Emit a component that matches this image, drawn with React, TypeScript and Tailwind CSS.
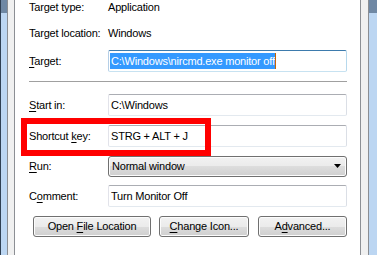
import React from "react";

const font = { fontFamily: "'Liberation Sans', Arial, sans-serif" };

const txt = "text-[11px] leading-[15px] tracking-[-0.2px] whitespace-nowrap text-black";

function Label({ children }: { children: React.ReactNode }) {
  return <div className={`w-[79px] shrink-0 ${txt}`}>{children}</div>;
}

function TextBox({ children }: { children: React.ReactNode }) {
  return (
    <div className={`flex h-[22px] flex-1 items-center rounded-[2px] border border-t-[#abadb3] border-l-[#e2e3ea] border-r-[#dbdfe6] border-b-[#e3e9ef] bg-white pl-[2px] ${txt}`}>
      {children}
    </div>
  );
}

function Btn({ children, w }: { children: React.ReactNode; w: string }) {
  return (
    <div
      className={`${w} flex h-[21px] items-center justify-center rounded-[3px] border border-[#707070] bg-[linear-gradient(#f2f2f2_0%,#ebebeb_50%,#dddddd_50%,#cfcfcf_100%)] shadow-[inset_0_0_0_1px_#fcfcfc] ${txt}`}
    >
      {children}
    </div>
  );
}

const U = ({ children }: { children: React.ReactNode }) => (
  <span className="underline decoration-1 underline-offset-[2px]">{children}</span>
);

export default function App() {
  return (
    <div className="flex h-[255px] w-[377px] overflow-hidden bg-white" style={font}>
      {/* left frame */}
      <div className="w-px bg-[#2f3f52]" />
      <div className="flex w-[6px] flex-col">
        <div className="h-[13px] bg-[#6f88a4]" />
        <div className="flex-1 bg-[#bcd6f2]" />
      </div>
      <div className="w-px bg-[#8a8d92]" />
      <div className="w-[6px] bg-[#f0f0f0]" />
      <div className="w-px bg-[#8c8f94]" />

      {/* panel */}
      <div className="relative flex w-[345px] flex-col bg-white pl-[14px] pr-[13px]">
        <div className="flex h-[15px] items-center">
          <Label>Target type:</Label>
          <div className={txt}>Application</div>
        </div>
        <div className="mt-[11px] flex h-[15px] items-center">
          <Label>Target location:</Label>
          <div className={txt}>Windows</div>
        </div>
        <div className="mt-[9px] flex h-[22px] items-center">
          <Label>
            <U>T</U>arget:
          </Label>
          <div className={`flex h-[22px] flex-1 items-center rounded-[2px] border border-t-[#3d7bad] border-l-[#b5cfe7] border-r-[#b7d9ed] border-b-[#c7e2f1] bg-white pl-px ${txt}`}>
            <span className="flex h-[16px] items-center bg-[#3399ff] pl-[1px] text-white">
              C:\Windows\nircmd.exe monitor off
            </span>
            <span className="h-[16px] w-px bg-[#c86400]" />
          </div>
        </div>
        <div className="mt-[9px] h-px bg-[#a0a0a0]" />
        <div className="mt-[12px] flex h-[22px] items-center">
          <Label>
            <U>S</U>tart in:
          </Label>
          <TextBox>C:\Windows</TextBox>
        </div>
        <div className="mt-[9px] flex h-[22px] items-center">
          <Label>
            Shortcut <U>k</U>ey:
          </Label>
          <TextBox>STRG + ALT + J</TextBox>
        </div>
        <div className="mt-[9px] flex h-[21px] items-center">
          <Label>
            <U>R</U>un:
          </Label>
          <div className={`flex h-[21px] flex-1 items-center justify-between rounded-[3px] border border-[#707070] bg-[linear-gradient(#f2f2f2_0%,#ebebeb_50%,#dddddd_50%,#cfcfcf_100%)] pl-[3px] pr-[4px] shadow-[inset_0_0_0_1px_#fcfcfc] ${txt}`}>
            <span>Normal window</span>
            <svg width="8" height="5" viewBox="0 0 8 5">
              <path d="M0 0H7L3.5 4Z" fill="#000" />
            </svg>
          </div>
        </div>
        <div className="mt-[8px] flex h-[22px] items-center">
          <Label>
            C<U>o</U>mment:
          </Label>
          <TextBox>Turn Monitor Off</TextBox>
        </div>
        <div className="mt-[9px] flex items-center pl-[4px]">
          <Btn w="w-[118px]">
            Open&nbsp;<U>F</U>ile Location
          </Btn>
          <div className="ml-[8px]">
            <Btn w="w-[90px]">
              <U>C</U>hange Icon...
            </Btn>
          </div>
          <div className="ml-[9px]">
            <Btn w="w-[89px]">
              A<U>d</U>vanced...
            </Btn>
          </div>
        </div>

        {/* red highlight */}
        <div className="absolute left-[6px] top-[118px] h-[38px] w-[190px] border-[6px] border-[#ff0000]" />
      </div>

      {/* right frame */}
      <div className="w-px bg-[#8c8f94]" />
      <div className="w-[7px] bg-[#f0f0f0]" />
      <div className="w-px bg-[#8a8d92]" />
      <div className="flex w-[8px] flex-col">
        <div className="h-[13px] bg-[#6f88a4]" />
        <div className="flex-1 bg-[#bcd6f2]" />
      </div>
    </div>
  );
}
